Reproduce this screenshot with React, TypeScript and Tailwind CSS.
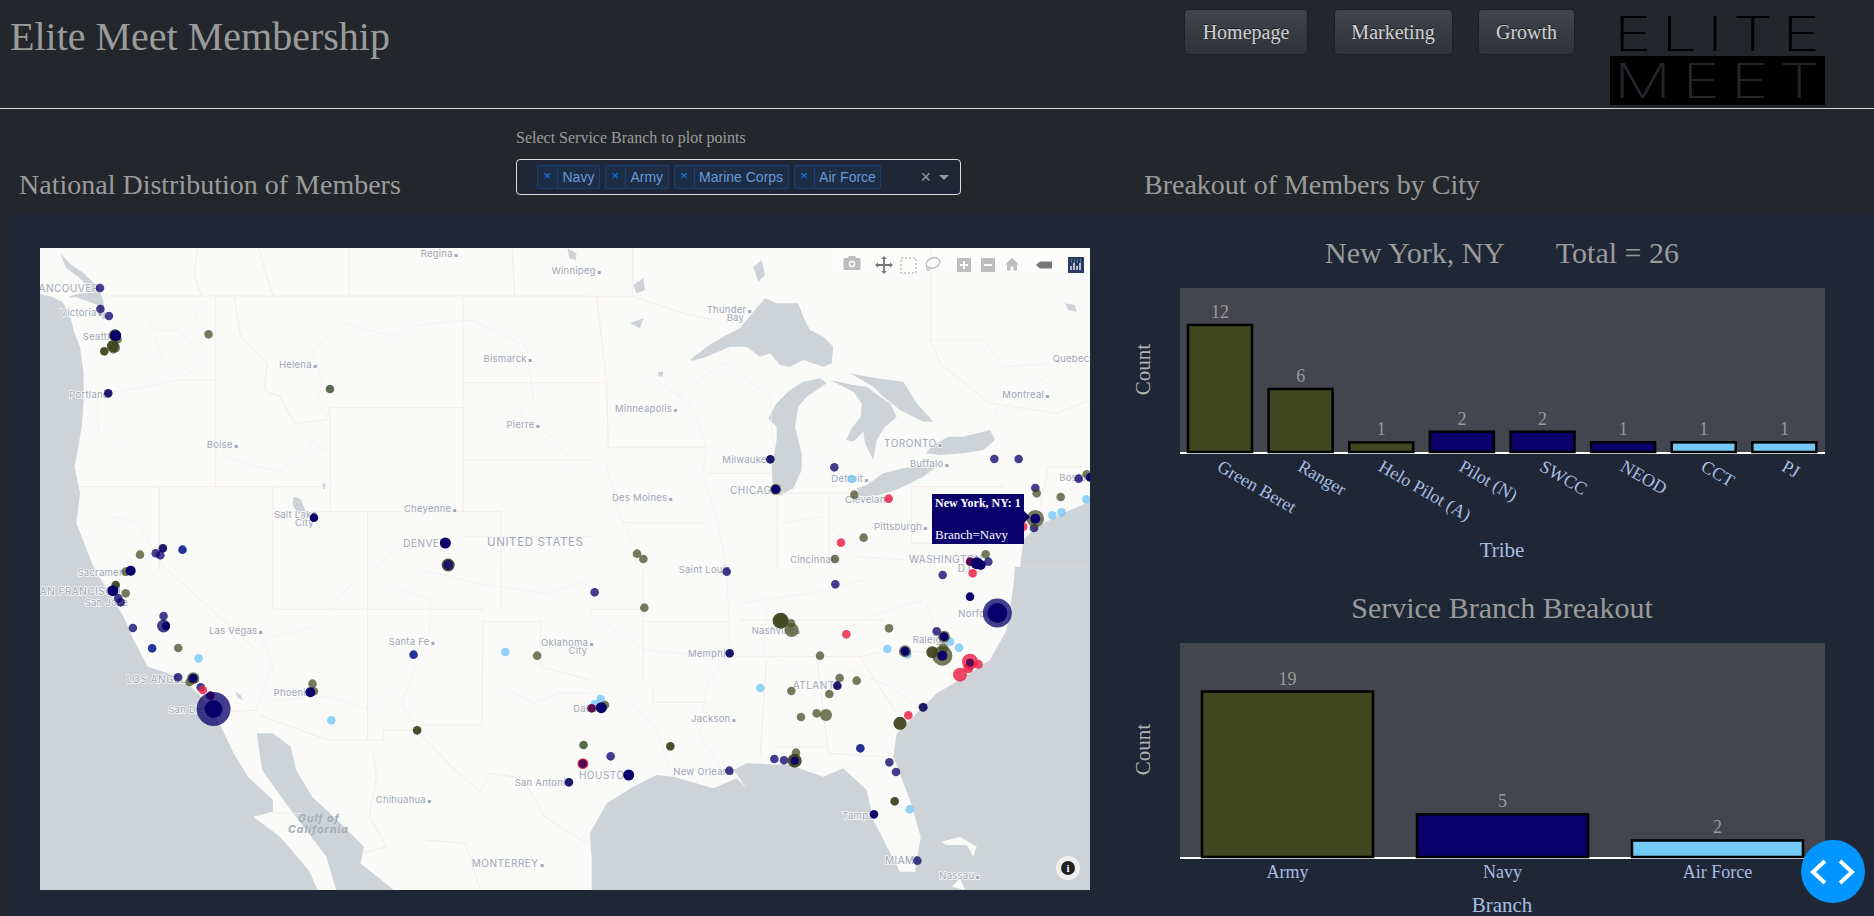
const OLIVE = '#414820';
const NAVY = '#0a006b';
const SKY = '#73c8f5';

// dot colours on the map
const C: Record<string, string> = {
    n: 'rgba(10,0,107,0.76)',
    N: '#0a006b',
    D: '#1c1768',
    o: 'rgba(65,72,32,0.72)',
    O: 'rgba(58,64,24,0.92)',
    s: 'rgba(115,200,245,0.78)',
    r: 'rgba(235,30,70,0.82)',
    m: '#5a0a50',
    g: '#5a6b50',
    b: '#25329a',
};

type Dot = [number, number, string, number?];
type Label = [number, number, string, number?];

// the coordinates were read off crops, each crop has its own origin and x scale
const zones = {
    nw: { ox: 30, oy: 240, sx: 2.8 },
    sw: { ox: 30, oy: 570, sx: 2.8 },
    ne: { ox: 590, oy: 240, sx: 3 },
    se: { ox: 590, oy: 570, sx: 3 },
};
type Zone = keyof typeof zones;

const DOTS: Record<Zone, Dot[]> = {
    nw: [
        [196, 144, 'n'], [197, 207, 'n'], [221, 228, 'n'], [238, 286, 'O', 6], [245, 298, 'o'], [240, 287, 'N', 5.5],
        [232, 318, 'O', 6], [238, 323, 'o', 5], [208, 334, 'O'], [233, 328, 'o'], [500, 283, 'o'], [840, 447, 'g'],
        [219, 460, 'D'], [795, 833, 'N'], [1163, 909, 'N', 5.5], [1171, 975, 'O', 6.5], [1171, 975, 'D', 5],
        [427, 929, 'b'], [372, 925, 'D'], [352, 940, 'n'], [365, 946, 'n'], [308, 944, 'o'],
    ],
    sw: [
        [268, 5, 'o'], [282, 2, 'N', 5], [240, 45, 'O'], [268, 70, 'o'], [232, 62, 'N', 5.5], [247, 85, 'n'], [254, 97, 'n'],
        [374, 138, 'n'], [374, 168, 'n', 6.5], [381, 168, 'N', 4], [288, 174, 'n'], [342, 235, 'b'], [415, 234, 'o'],
        [472, 265, 's'], [414, 322, 'n'], [457, 325, 'o', 6], [447, 336, 'o'], [457, 325, 'N', 4.5], [478, 352, 'n'],
        [484, 360, 'r'], [505, 377, 'm'], [514, 417, 'n', 17], [514, 417, 'N', 9], [791, 341, 'o'], [795, 364, 'o'],
        [785, 367, 'N', 5], [844, 451, 's'], [1074, 254, 'b'], [1084, 481, 'O'], [1331, 246, 's'], [1420, 257, 'o'],
        [1550, 525, 'g'], [1548, 581, 'r', 5.5], [1548, 581, 'm', 4.5], [1509, 637, 'D'],
    ],
    ne: [
        [541, 658, 'D'], [557, 748, 'o', 5.5], [557, 748, 'N', 4.5], [733, 682, 'n'], [785, 717, 's'], [793, 764, 'o'],
        [896, 776, 'r'], [1213, 657, 'n'], [1286, 657, 'n'], [1336, 744, 'n'], [1340, 760, 'o'], [1412, 771, 'o'],
        [1466, 716, 'n'], [1490, 703, 'o'], [1500, 712, 'N'], [1489, 778, 's'], [1415, 817, 's'], [1387, 826, 's'],
        [1300, 860, 'r'], [1332, 864, 'n'], [1336, 836, 'o', 8.7], [1336, 836, 'N', 5], [753, 908, 'r'], [821, 893, 'o'],
        [735, 957, 'o'], [141, 941, 'o'], [160, 957, 'o'], [1187, 943, 'o'], [1140, 965, 'm'], [1195, 965, 'n'],
        [1160, 970, 'N', 6], [1172, 975, 'N', 5],
    ],
    se: [
        [410, 5, 'n'], [1058, 15, 'n'], [736, 43, 'n'], [14, 67, 'n'], [163, 113, 'o'], [1148, 10, 'r'], [1140, 80, 'N'],
        [1222, 129, 'n', 14.5], [1222, 129, 'N', 10], [572, 152, 'O', 8], [572, 152, 'o', 6], [603, 160, 'o'],
        [605, 180, 'o', 7], [769, 193, 'r'], [897, 175, 'o'], [1040, 184, 'n'], [1080, 215, 's'], [1062, 200, 'o', 6],
        [1062, 200, 'N', 4.5], [1107, 233, 's'], [892, 237, 's'], [952, 253, 's'], [945, 244, 'o', 6], [945, 244, 'N', 4.5],
        [1027, 247, 'O', 6], [1060, 235, 'o', 5], [1057, 257, 'o', 10], [1057, 257, 'N', 5], [1110, 314, 'r', 7],
        [1135, 295, 'r', 5], [1165, 283, 'r', 4.5], [1140, 275, 'r', 8], [1140, 278, 'm', 4], [419, 250, 'D'], [690, 257, 'o'],
        [749, 324, 'o'], [800, 332, 'o'], [742, 347, 'D'], [511, 354, 's'], [604, 363, 'o'], [718, 372, 'o'], [32, 387, 's'],
        [14, 403, 's'], [45, 405, 'o'], [5, 415, 'm'], [34, 413, 'N', 5.5], [633, 441, 'o'], [680, 430, 'o'], [708, 435, 'o', 6],
        [955, 436, 'r'], [998, 412, 'o'], [1000, 412, 'D'], [930, 460, 'O', 6.5], [241, 529, 'O'], [811, 535, 'b'], [62, 559, 'n'],
        [116, 615, 'N', 5.5], [418, 602, 'n'], [553, 567, 'n'], [582, 571, 'n'], [618, 548, 'o'], [614, 572, 'O', 7],
        [614, 572, 'N', 4], [898, 577, 'n'], [918, 606, 'n'], [914, 694, 'O'], [959, 718, 's'], [852, 733, 'N'], [982, 872, 'n'],
    ],
};

const LABELS: Record<Zone, Label[]> = {
    nw: [
        [1094, 40, 'Regina', 1], [1460, 90, 'Winnipeg', 1], [5, 146, 'VANCOUVER'], [85, 217, 'Victoria', 1],
        [148, 289, 'Seattle'], [110, 462, 'Portland'], [697, 373, 'Helena', 1], [495, 613, 'Boise', 1],
        [1270, 355, 'Bismarck', 1], [1334, 554, 'Pierre', 1], [683, 822, 'Salt Lake'], [742, 847, 'City'],
        [1047, 806, 'Cheyenne', 1], [1045, 909, 'DENVER'],
    ],
    sw: [
        [133, 8, 'Sacramento'], [8, 65, 'SAN FRANCISCO'], [153, 96, 'San Jose'], [501, 180, 'Las Vegas', 1],
        [1004, 214, 'Santa Fe', 1], [1431, 216, 'Oklahoma', 1], [1508, 241, 'City'], [270, 327, 'LOS ANGELES'],
        [387, 418, 'San Diego'], [682, 368, 'Phoenix'], [1521, 414, 'Dallas'], [1537, 617, 'HOUSTON'],
        [1357, 638, 'San Antonio'], [968, 689, 'Chihuahua', 1], [1237, 880, 'MONTERREY', 1],
    ],
    ne: [
        [350, 208, 'Thunder', 1], [410, 233, 'Bay'], [75, 506, 'Minneapolis', 1], [397, 659, 'Milwaukee'],
        [420, 750, 'CHICAGO'], [66, 771, 'Des Moines', 1], [724, 714, 'Detroit', 1], [765, 778, 'Cleveland'],
        [852, 859, 'Pittsburgh', 1], [600, 958, 'Cincinnati'], [882, 611, 'TORONTO', 1], [960, 670, 'Buffalo', 1],
        [1237, 463, 'Montreal', 1], [1388, 356, 'Quebec', 1], [1408, 712, 'Boston'], [957, 959, 'WASHINGTON'],
        [1103, 985, 'D.C.'], [266, 988, 'Saint Louis'],
    ],
    se: [
        [485, 180, 'Nashville', 1], [294, 251, 'Memphis'], [968, 207, 'Raleigh'], [1105, 130, 'Norfolk'],
        [608, 347, 'ATLANTA'], [303, 446, 'Jackson', 1], [250, 604, 'New Orleans'], [757, 735, 'Tampa'],
        [885, 872, 'MIAMI'], [1048, 916, 'Nassau', 1],
    ],
};

const WATER: Record<Zone, string[]> = {
    nw: [
        '20,160 60,170 90,185 110,220 125,280 140,320 150,400 150,480 145,560 125,680 140,760 130,850 170,960 200,1030 -10,1030',
        '85,40 110,70 150,100 190,140 205,180 212,235 203,238 190,195 130,172 105,172 130,162 165,158 148,122 100,82',
        '738,770 758,778 772,815 752,822 735,795',
        '1505,25 1530,40 1528,60 1510,55',
        '820,730 828,732 826,748 820,746',
    ],
    sw: [
        '-10,-10 170,-10 200,30 240,100 262,140 290,210 330,290 400,315 440,340 480,380 530,460 570,550 610,620 680,690 680,725 625,740 700,800 780,900 810,970 -10,970',
        '635,490 680,490 730,530 745,600 790,680 850,740 935,830 925,880 1030,970 860,970 830,860 780,790 730,720 650,600',
        '575,365 590,375 596,390 582,385',
    ],
    ne: [
        '300,360 350,320 400,290 450,265 490,215 525,175 560,190 625,190 640,230 660,270 700,290 730,320 725,370 700,380 640,360 600,380 570,375 540,340 510,350 470,320 420,320 350,350 310,362',
        '535,535 560,490 600,450 640,425 690,415 710,430 650,470 625,500 615,560 635,640 635,690 610,745 570,768 548,740 545,680 560,600 560,560',
        '720,420 790,435 830,440 870,470 900,490 920,530 885,560 860,600 850,660 825,610 820,575 790,605 768,600 785,565 812,530 815,490 790,455',
        '780,400 860,415 940,425 980,490 1030,545 1000,545 930,510 880,470 850,440',
        '1008,640 1030,615 1075,590 1120,590 1200,570 1215,600 1180,630 1120,640 1050,645',
        '800,745 830,735 880,700 940,685 1050,672 1000,710 930,745 870,765 810,770',
        '1290,980 1300,900 1340,860 1420,820 1510,780 1510,980',
        '120,250 160,235 150,265',
        '205,395 220,395 218,410 205,408',
        '130,135 160,115 165,150 140,160',
        '490,80 515,60 525,105 505,125',
        '1425,190 1455,195 1460,215 1435,210',
    ],
    se: [
        '5,970 5,870 0,790 50,700 130,650 200,615 250,620 370,655 440,625 470,655 430,600 470,580 600,585 700,620 760,595 830,660 850,750 930,905 975,905 992,800 960,690 910,560 920,490 1040,370 1100,335 1200,270 1250,180 1270,50 1275,-10 1510,-10 1510,970',
    ],
};

const LAND_SPECKS: Record<Zone, string[]> = {
    nw: [],
    sw: [],
    ne: [],
    se: [
        '1085,950 1110,925 1125,960',
        '1055,815 1110,800 1160,830 1150,860 1130,825 1070,825',
    ],
};

const BORDERS: Record<Zone, string[]> = {
    nw: [
        '215,168 1568,168', '520,170 520,740', '572,170 590,290 665,370 655,450 700,470 740,550 830,540 840,500',
        '840,503 1213,503', '1213,170 1213,815', '1213,428 1568,428', '1213,660 1568,660', '840,503 840,815',
        '680,815 1318,815', '1318,815 1318,990', '945,815 945,990', '135,740 840,740', '680,740 680,990', '362,740 362,990',
        '415,420 520,420', '894,25 894,168', '1350,25 1357,168', '640,25 680,168', '470,25 460,100 480,168',
        '1213,890 1568,890',
    ],
    sw: [
        '680,0 680,118', '680,118 1270,118', '945,0 945,510', '1320,0 1320,118', '1268,155 1430,155', '1268,155 1265,465',
        '1080,465 1265,465', '1430,155 1430,290 1568,330', '385,0 650,255', '640,420 560,425', '640,435 835,510 990,510 990,480 1080,480',
        '1090,490 1180,590 1260,665 1290,610 1380,625 1440,740 1560,820', '680,730 760,730',
        '960,540 970,620 950,740 1000,830 930,850', '1110,810 1220,820 1260,960',
    ],
    ne: [
        '0,170 130,170 280,220 370,240', '128,25 128,170', '20,170 50,430 55,622', '0,428 45,428', '45,622 350,622',
        '350,700 545,700', '562,760 562,990', '718,760 718,950', '565,760 800,760', '965,740 1245,740', '965,740 965,910',
        '965,910 1245,910', '95,848 340,848', '1050,370 1200,490 1400,520 1500,480', '1022,25 1022,300 1050,370',
        '1375,680 1500,680', '1375,680 1350,800',
    ],
    se: [
        '0,118 160,118', '160,0 160,330', '160,155 415,155', '430,260 810,260', '450,150 880,150', '190,360 190,400',
        '190,397 355,397', '530,270 510,560', '680,260 715,550', '715,550 880,560', '555,530 715,530', '810,260 900,240 1060,250 1090,330',
        '810,260 920,430',
    ],
};

const RIVERS: Record<Zone, string[]> = {
    nw: [
        '230,455 300,445 415,420 490,365 420,270 350,270 330,230', '350,290 365,350 415,405', '460,230 500,175',
        '190,470 190,570 250,630', '520,600 550,650 640,680 700,695 760,650 790,605 840,640', '790,330 890,250 1010,290 1090,255 1230,240 1300,270 1390,320 1410,480 1370,520 1460,590 1530,680',
        '790,330 820,430 800,490 830,520', '230,830 300,850 380,990', '1090,870 960,990',
    ],
    sw: [
        '1030,60 1120,90 1120,180 1040,400 1080,470', '640,180 680,290 630,420', '680,200 800,170 860,90 920,20',
        '680,390 840,380 950,420 1000,360', '1340,360 1410,400 1480,370 1568,370', '1100,0 1250,40 1440,70 1568,30',
    ],
    ne: [
        '170,400 300,490 350,620 340,700 380,830 410,980', '260,470 400,370 540,470 550,620', '570,850 700,830 800,950 950,960',
        '50,680 90,830 140,930', '1010,300 1180,300 1240,380 1400,370', '1240,470 1210,530 1380,400',
    ],
    se: [
        '410,0 420,240 350,350 330,500 390,590', '0,130 160,240 400,260', '530,120 520,250 640,300', '100,370 200,480 240,590',
        '700,240 810,150 1000,90', '780,300 900,350 1000,420', '1010,100 1040,200 1150,220', '450,100 660,70 820,30',
    ],
};

const toPage = (z: Zone, x: number, y: number) => {
    const { ox, oy, sx } = zones[z];
    return [ox + x / sx, oy + y / 3];
};

const toPoints = (z: Zone, pts: string) =>
    pts
        .split(' ')
        .map((p) => {
            const [x, y] = p.split(',').map(Number);
            return toPage(z, x, y).map((v) => v.toFixed(1)).join(',');
        })
        .join(' ');

const ZONE_KEYS = Object.keys(zones) as Zone[];

function MapSvg() {
    return (
        <svg viewBox="40 248 1050 642" width={1050} height={642} className="block">
            <rect x={40} y={248} width={1050} height={642} fill="#fafaf8" />
            {ZONE_KEYS.map((z) => WATER[z].map((p, i) => <polygon key={z + i} points={toPoints(z, p)} fill="#cdd3d6" />))}
            {ZONE_KEYS.map((z) => LAND_SPECKS[z].map((p, i) => <polygon key={z + i} points={toPoints(z, p)} fill="#fafaf8" />))}
            {ZONE_KEYS.map((z) =>
                RIVERS[z].map((p, i) => <polyline key={z + i} points={toPoints(z, p)} fill="none" stroke="#f0f0f0" strokeWidth={0.8} />),
            )}
            {ZONE_KEYS.map((z) =>
                BORDERS[z].map((p, i) => <polyline key={z + i} points={toPoints(z, p)} fill="none" stroke="#f6eaea" strokeWidth={1} />),
            )}
            <g fontFamily="Inter, sans-serif" fontSize={9.5} letterSpacing={0.25} fill="#9fa8b6" stroke="#fafaf8" strokeWidth={1.5} paintOrder="stroke">
                {ZONE_KEYS.map((z) =>
                    LABELS[z].map(([x, y, t, dot]) => {
                        const [px, py] = toPage(z, x, y);
                        const upper = t === t.toUpperCase();
                        return (
                            <text key={t} x={px} y={py + 3.5} fontSize={upper ? 10 : undefined} letterSpacing={upper ? 0.5 : undefined}>
                                {t}
                                {dot ? <tspan dx={1.5} fontSize={4}>■</tspan> : null}
                            </text>
                        );
                    }),
                )}
                <text x={487} y={546} fontSize={11.5} letterSpacing={0.6}>UNITED STATES</text>
                <g fontStyle="italic" fontWeight={700} fontSize={10.5} letterSpacing={1} fill="#a5adb5" stroke="none">
                    <text x={298} y={822}>Gulf of</text>
                    <text x={288} y={832.5}>California</text>
                </g>
            </g>
            {ZONE_KEYS.map((z) =>
                DOTS[z].map(([x, y, c, r], i) => {
                    const [px, py] = toPage(z, x, y);
                    return <circle key={z + i} cx={px} cy={py} r={r ?? 4.3} fill={C[c]} />;
                }),
            )}
        </svg>
    );
}

function ModeBar() {
    return (
        <div className="absolute top-0 right-0 flex h-6 w-[258px] items-center bg-white/40">
            <svg viewBox="832 248 258 34" width={258} height={34} className="mt-[10px] block">
                {/* camera */}
                <path d="M845 258h3l1-2h6l1 2h3a1.500 1.500 0 0 1 1.500 1.500v9a1.500 1.500 0 0 1-1.500 1.500h-14a1.500 1.500 0 0 1-1.500-1.500v-9a1.500 1.500 0 0 1 1.500-1.500z" fill="#bdbdbd" />
                <circle cx={852} cy={264} r={3.400} fill="#fafaf8" />
                <circle cx={852} cy={264} r={1.800} fill="#bdbdbd" />
                {/* move */}
                <path d="M884 257v16M876 265h16" stroke="#777" strokeWidth={1.800} />
                <path d="M884 256l2.800 3h-5.600zM884 274l2.800-3h-5.600zM875 265l3-2.800v5.600zM893 265l-3-2.800v5.600z" fill="#777" />
                {/* box select */}
                <rect x={901} y={258} width={15} height={15} fill="none" stroke="#bdbdbd" strokeWidth={1.500} strokeDasharray="2 2" />
                {/* lasso */}
                <ellipse cx={933} cy={263} rx={7} ry={5} fill="none" stroke="#bdbdbd" strokeWidth={1.400} transform="rotate(-20 933 263)" />
                <path d="M927 267c-1 3 1 4 2 3s0-3-2-3z" fill="none" stroke="#bdbdbd" strokeWidth={1.200} />
                {/* zoom in and out */}
                <rect x={957} y={258} width={14} height={14} fill="#bdbdbd" />
                <path d="M964 261v8M960 265h8" stroke="#fafaf8" strokeWidth={2} />
                <rect x={981} y={258} width={14} height={14} fill="#bdbdbd" />
                <path d="M984 265h8" stroke="#fafaf8" strokeWidth={2} />
                {/* home */}
                <path d="M1012 258l7 6.500h-2v6h-3.500v-4h-3v4H1007v-6h-2z" fill="#bdbdbd" />
                {/* hover tag */}
                <path d="M1036 265l4-3.500h12v7h-12z" fill="#777" />
                {/* plotly */}
                <rect x={1068} y={257} width={16} height={16} fill="#2b3a63" />
                <path d="M1071 266v4M1074 263v7M1077 266v4M1080 263v7" stroke="#fff" strokeWidth={1.300} />
                <path d="M1071 260h10M1071 262h10" stroke="#69c7c0" strokeWidth={0.900} strokeDasharray="1 2" />
            </svg>
        </div>
    );
}

type Bar = { label: string; value: number; fill: string; x: number };

function BarChart({ bars, height, plotH, barW, unit, rotated, xTitle, titleY }: {
    bars: Bar[];
    height: number;
    plotH: number;
    barW: number;
    unit: number;
    rotated: boolean;
    xTitle: string;
    titleY: number;
}) {
    const axis = 18 + plotH;
    return (
        <svg viewBox={`0 0 744 ${height}`} width={744} height={height} className="block" fontFamily="'Liberation Serif', serif">
            <rect x={50} y={18} width={645} height={plotH} fill="#43464e" />
            <rect x={50} y={axis - 1} width={645} height={2} fill="#ffffff" />
            {bars.map((b) => {
                const h = b.value * unit;
                const tx = b.x + barW / 2 - 4;
                return (
                    <g key={b.label}>
                        <rect x={b.x + 1} y={axis - h} width={barW - 2} height={h - 1} fill={b.fill} stroke="#000" strokeWidth={2.5} />
                        <text x={b.x + barW / 2} y={axis - h - 7} textAnchor="middle" fontSize={18} fill="#999">
                            {b.value}
                        </text>
                        {rotated ? (
                            <text x={tx} y={axis + 17} transform={`rotate(30 ${tx} ${axis + 17})`} fontSize={18} fill="#a9bfe0">
                                {b.label}
                            </text>
                        ) : (
                            <text x={b.x + barW / 2} y={axis + 20} textAnchor="middle" fontSize={18} fill="#a9bfe0">
                                {b.label}
                            </text>
                        )}
                    </g>
                );
            })}
            <text x={372} y={titleY} textAnchor="middle" fontSize={21} fill="#a9bfe0">
                {xTitle}
            </text>
            <text x={20} y={18 + plotH / 2 - 1} transform={`rotate(-90 20 ${18 + plotH / 2 - 1})`} textAnchor="middle" fontSize={21} fill="#b5b5b5">
                Count
            </text>
        </svg>
    );
}

const TRIBES: Bar[] = [
    ['Green Beret', 12, OLIVE],
    ['Ranger', 6, OLIVE],
    ['Helo Pilot (A)', 1, OLIVE],
    ['Pilot (N)', 2, NAVY],
    ['SWCC', 2, NAVY],
    ['NEOD', 1, NAVY],
    ['CCT', 1, SKY],
    ['PJ', 1, SKY],
].map(([label, value, fill], i) => ({
    label: label as string,
    value: value as number,
    fill: fill as string,
    x: 57 + i * 80.625,
}));

const BRANCHES: Bar[] = [
    { label: 'Army', value: 19, fill: OLIVE, x: 71 },
    { label: 'Navy', value: 5, fill: NAVY, x: 286 },
    { label: 'Air Force', value: 2, fill: SKY, x: 501 },
];

function Tag({ name }: { name: string }) {
    return (
        <div className="flex h-6 items-center rounded-[2px] border border-[#007eff3d] bg-[#007eff14] text-[14px] text-[#6a9ad6]">
            <span className="flex h-full w-[20px] items-center justify-center border-r border-[#007eff3d] pb-[2px] text-[13px] text-[#007eff]">×</span>
            <span className="px-[4.5px]">{name}</span>
        </div>
    );
}

function NavButton({ label, width }: { label: string; width: string }) {
    return (
        <button
            type="button"
            className={`h-[46px] ${width} rounded-[4px] border border-[#1b1e22] bg-gradient-to-b from-[#40444b] to-[#2f3339] text-[20px] text-[#d2d2d2] [text-shadow:0_-1px_0_rgba(0,0,0,0.6)]`}
        >
            {label}
        </button>
    );
}

export default function App() {
    return (
        <div className="relative h-[916px] w-[1874px] overflow-hidden bg-[#23272c] font-['Liberation_Serif',serif] text-[#9b9b9b]">
            {/* Header */}
            <header className="flex h-[108px] items-start border-b-0">
                <h1 className="mt-[13px] ml-[10px] text-[40px] leading-[48px]">Elite Meet Membership</h1>
                <div className="mt-[9px] ml-auto flex gap-[25.5px]">
                    <NavButton label="Homepage" width="w-[124px]" />
                    <NavButton label="Marketing" width="w-[119px]" />
                    <NavButton label="Growth" width="w-[97px]" />
                </div>
                <div className="mt-[11px] mr-[49px] ml-[35px] w-[215px] font-['Inter',sans-serif] font-extralight">
                    <div className="h-[45px] pl-[4px]">
                        <span className="inline-block origin-left scale-x-[1.33] text-[48px] leading-[45px] tracking-[0.15em] whitespace-nowrap text-black">ELITE</span>
                    </div>
                    <div className="h-[49px] bg-black pl-[4px]">
                        <span className="inline-block origin-left scale-x-[1.33] text-[48px] leading-[49px] tracking-[0.17em] whitespace-nowrap text-[#23272c]">MEET</span>
                    </div>
                </div>
            </header>
            <hr className="border-0 border-t border-[#d6d6d6]" />

            {/* Headings and branch filter */}
            <div className="flex h-[105px]">
                <h3 className="mt-[59px] w-[516px] pl-[19px] text-[28px] leading-[34px]">National Distribution of Members</h3>
                <div className="mt-[17px] w-[445px]">
                    <label className="block text-[16px] leading-6">Select Service Branch to plot points</label>
                    <div className="mt-[9px] flex h-9 items-center rounded-[4px] border border-[#dddddd] bg-[#1f2736] pl-[20px] font-['Liberation_Sans',sans-serif]">
                        <div className="flex gap-[5px]">
                            <Tag name="Navy" />
                            <Tag name="Army" />
                            <Tag name="Marine Corps" />
                            <Tag name="Air Force" />
                        </div>
                        <span className="ml-auto text-[18px] leading-none text-[#999999]">×</span>
                        <span className="mr-[11px] ml-[8px] h-0 w-0 border-x-[5px] border-t-[5px] border-x-transparent border-t-[#999999]" />
                    </div>
                </div>
                <h3 className="mt-[59px] ml-[183px] text-[28px] leading-[34px]">Breakout of Members by City</h3>
            </div>

            {/* Dashboard panel */}
            <div className="ml-[10px] flex h-[702px] bg-[#1f2736]">
                <div className="w-[1120px] pt-[34px] pl-[30px]">
                    <div className="relative h-[642px] w-[1050px]">
                        <MapSvg />
                        <ModeBar />
                        {/* Hover label */}
                        <div className="absolute top-[246px] left-[892px] h-[50px] w-[92px] bg-[#0a006b] pl-[3px] text-white">
                            <div className="mt-[2px] text-[12px] leading-[15px] font-bold whitespace-nowrap">New York, NY: 1</div>
                            <div className="mt-[16px] text-[13px] leading-[15px] whitespace-nowrap">Branch=Navy</div>
                            <span className="absolute top-[17px] -right-[6px] h-0 w-0 border-y-[6px] border-l-[6px] border-y-transparent border-l-[#0a006b]" />
                        </div>
                        {/* Info */}
                        <div className="absolute right-[10px] bottom-[10px] flex h-6 w-6 items-center justify-center rounded-full bg-[#eeeeee]">
                            <span className="flex h-[14px] w-[14px] items-center justify-center rounded-full bg-[#222222] text-[11px] leading-none font-bold text-white">i</span>
                        </div>
                    </div>
                </div>
                <div className="w-[744px] pt-[21px]">
                    <h3 className="flex h-[35px] items-center justify-center text-[30px] leading-[34px] whitespace-pre">New York, NY       Total = 26</h3>
                    <BarChart bars={TRIBES} height={320} plotH={165} barW={66} unit={10.67} rotated xTitle="Tribe" titleY={287} />
                    <h3 className="h-[35px] pt-[1px] text-center text-[30px] leading-[34px]">Service Branch Breakout</h3>
                    <BarChart bars={BRANCHES} height={291} plotH={215} barW={173} unit={8.76} rotated={false} xTitle="Branch" titleY={287} />
                </div>
            </div>

            {/* Floating debug toggle */}
            <button type="button" className="absolute top-[840px] left-[1801px] h-[63px] w-[64px] rounded-full bg-[#0095ff]">
                <svg viewBox="0 0 64 63" width={64} height={63} fill="none" stroke="#fff" strokeWidth={4}>
                    <polyline points="24,21 12,32 24,43" />
                    <polyline points="39,21 51,32 39,43" />
                </svg>
            </button>
        </div>
    );
}
